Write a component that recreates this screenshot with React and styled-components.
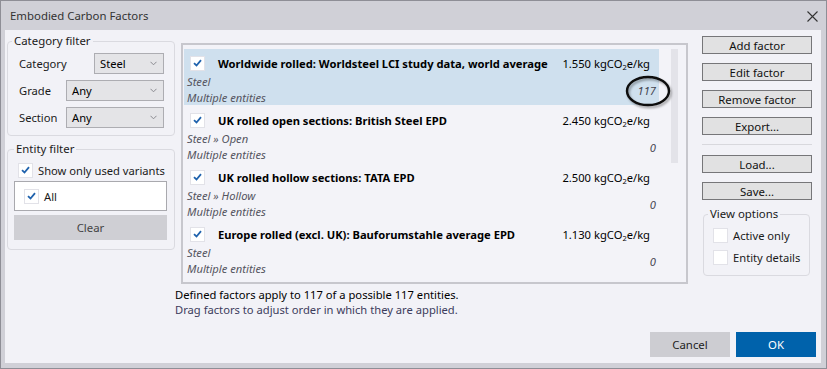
import React from "react";
import styled, { createGlobalStyle } from "styled-components";

const GlobalStyle = createGlobalStyle`
  html, body {
    margin: 0;
    padding: 0;
  }
  body {
    font-family: "Noto Sans", "Open Sans", sans-serif;
    font-size: 11.2px;
    color: #000;
    background: #f2f2f7;
  }
`;

const Window = styled.div`
  width: 827px;
  height: 369px;
  box-sizing: border-box;
  border: 1px solid #8e8e96;
  background: #d0d0d7;
  padding: 0 5px 5px 4px;
  display: flex;
  flex-direction: column;
`;

const TitleBar = styled.div`
  height: 29px;
  display: flex;
  align-items: center;
  justify-content: space-between;
  padding: 0 3px 0 5px;
  color: #333;
  font-size: 11.4px;
`;

const CloseButton = styled.svg`
  width: 11px;
  height: 11px;
  margin-top: 2px;
`;

const Content = styled.div`
  flex: 1;
  background: #f2f2f7;
  display: flex;
  flex-direction: column;
`;

const Main = styled.div`
  display: grid;
  grid-template-columns: 168px 513px 124px;
  padding-left: 2px;
  align-items: start;
`;

const LeftCol = styled.div`
  padding-top: 3px;
  display: flex;
  flex-direction: column;
  gap: 5px;
`;

const Group = styled.fieldset`
  margin: 0;
  border: 1px solid #dadae0;
  border-radius: 4px;
  padding: ${({ $pad }) => $pad || "4px 10px 7px 11px"};
  display: flex;
  flex-direction: column;
  gap: ${({ $gap }) => $gap || "6px"};
  min-width: 0;
`;

const Legend = styled.legend`
  padding: 0 2px;
  margin-left: ${({ $shift }) => $shift || "-7px"};
  line-height: 16px;
  font-size: 11.4px;
  color: #1a1a1a;
`;

const FieldRow = styled.div`
  display: flex;
  align-items: center;
  justify-content: space-between;
  height: 21px;
`;

const FieldLabel = styled.span`
  color: #1a1a1a;
  font-size: 11.2px;
`;

const Select = styled.div`
  box-sizing: border-box;
  width: ${({ $w }) => $w}px;
  height: 21px;
  border: 1px solid #adadb2;
  background: #e4e4e7;
  display: flex;
  align-items: center;
  justify-content: space-between;
  padding: 0 6px 0 5px;
  font-size: 11.2px;
`;

const Chevron = styled.svg`
  width: 7px;
  height: 5px;
`;

const CheckRow = styled.label`
  display: flex;
  align-items: center;
  gap: 5px;
  height: ${({ $h }) => $h || 18}px;
  margin-left: ${({ $indent }) => $indent || 0}px;
  font-size: 11.2px;
  color: #1a1a1a;
  white-space: nowrap;
`;

const Box = styled.span`
  box-sizing: border-box;
  width: 15px;
  height: 15px;
  background: #fff;
  border: 1px solid #e2e2e8;
  display: inline-flex;
  align-items: center;
  justify-content: center;
  flex: none;
`;

const EntityList = styled.div`
  box-sizing: border-box;
  height: 30px;
  margin-top: 2px;
  background: #fff;
  border: 1px solid #a9a9ae;
  display: flex;
  align-items: center;
  padding-left: 9px;
`;

const ClearButton = styled.div`
  height: 25px;
  margin-top: 4px;
  background: #cfcfd4;
  color: #444;
  display: flex;
  align-items: center;
  justify-content: center;
  font-size: 11.4px;
`;

const CenterCol = styled.div`
  padding-top: 13px;
`;

const ListBox = styled.div`
  margin-left: 6px;
  width: 507px;
  height: 241px;
  box-sizing: border-box;
  border: 2px solid #c7c7cd;
  background: #f3f3f8;
  padding: 4px 8px 0 1px;
  display: flex;
  gap: 12px;
  align-items: flex-start;
`;

const Items = styled.div`
  width: 475px;
  display: flex;
  flex-direction: column;
`;

const Item = styled.div`
  position: relative;
  height: 57px;
  background: ${({ $selected }) => ($selected ? "#cfe0ee" : "transparent")};
  ${({ $selected }) => $selected && "height: 56px; margin-bottom: 1px;"}
`;

const ItemHead = styled.div`
  height: 22px;
  padding-top: 3px;
  display: flex;
  align-items: center;
  padding-left: 6px;
  padding-right: 9px;
`;

const ItemTitle = styled.span`
  font-weight: 700;
  margin-left: 13px;
  flex: 1;
  white-space: nowrap;
`;

const ItemValue = styled.span`
  white-space: nowrap;
`;

const Sub = styled.sub`
  font-size: 7.5px;
  vertical-align: -2px;
  line-height: 0;
`;

const ItemBody = styled.div`
  display: flex;
  align-items: center;
  justify-content: space-between;
  padding: 0 3px;
`;

const Meta = styled.div`
  display: flex;
  flex-direction: column;
  line-height: 16px;
  font-style: italic;
  color: #555560;
`;

const Count = styled.span`
  font-style: italic;
  color: #444450;
`;

const Annotation = styled.svg`
  position: absolute;
  left: 442px;
  top: 27px;
  width: 48px;
  height: 35px;
  overflow: visible;
`;

const Scrollbar = styled.div`
  width: 7px;
  height: 114px;
  background: #e3e3e9;
  flex: none;
`;

const Notes = styled.div`
  margin-top: 3px;
  line-height: 15px;
`;

const Note = styled.div`
  color: ${({ $muted }) => ($muted ? "#3c3c5c" : "#000")};
`;

const RightCol = styled.div`
  padding: 6px 0 0 14px;
  display: flex;
  flex-direction: column;
  gap: 9px;
`;

const SideButton = styled.div`
  box-sizing: border-box;
  height: 18px;
  border: 1px solid #767679;
  background: #e1e1e2;
  display: flex;
  align-items: center;
  justify-content: center;
  font-size: 11.4px;
  color: #111;
`;

const Separator = styled.div`
  height: 1px;
  background: #d8d8dd;
  margin: 0 0 1px;
`;

const ViewGroup = styled(Group)`
  margin: -3px 2px 0 1px;
`;

const Footer = styled.div`
  margin-top: auto;
  display: flex;
  justify-content: flex-end;
  gap: 6px;
  padding: 0 5px 6px 0;
`;

const DialogButton = styled.div`
  width: 80px;
  height: 25px;
  display: flex;
  align-items: center;
  justify-content: center;
  font-size: 11.4px;
  background: ${({ $primary }) => ($primary ? "#0062ab" : "#cdcdd2")};
  color: ${({ $primary }) => ($primary ? "#fff" : "#222")};
`;

const Check = () => (
  <svg width="9" height="8" viewBox="0 0 9 8">
    <path d="M1 4.2 L3.5 6.5 L8 1.2" fill="none" stroke="#1f62ad" strokeWidth="1.8" />
  </svg>
);

const Checkbox = ({ checked }) => <Box>{checked && <Check />}</Box>;

const SelectBox = ({ width, value }) => (
  <Select $w={width}>
    <span>{value}</span>
    <Chevron viewBox="0 0 7 5">
      <path d="M0.5 0.8 L3.5 3.8 L6.5 0.8" fill="none" stroke="#8a8a90" strokeWidth="1" />
    </Chevron>
  </Select>
);

const factors = [
  {
    title: "Worldwide rolled: Worldsteel LCI study data, world average",
    value: "1.550",
    path: "Steel",
    count: 117,
    selected: true,
  },
  { title: "UK rolled open sections: British Steel EPD", value: "2.450", path: "Steel » Open", count: 0 },
  { title: "UK rolled hollow sections: TATA EPD", value: "2.500", path: "Steel » Hollow", count: 0 },
  { title: "Europe rolled (excl. UK): Bauforumstahle average EPD", value: "1.130", path: "Steel", count: 0 },
];

export default function App() {
  return (
    <>
      <GlobalStyle />
      <Window>
        <TitleBar>
          <span>Embodied Carbon Factors</span>
          <CloseButton viewBox="0 0 11 11">
            <path d="M0.5 0.5 L10.5 10.5 M10.5 0.5 L0.5 10.5" stroke="#333" strokeWidth="1.1" />
          </CloseButton>
        </TitleBar>
        <Content>
          <Main>
            <LeftCol>
              <Group>
                <Legend>Category filter</Legend>
                <FieldRow>
                  <FieldLabel>Category</FieldLabel>
                  <SelectBox width={70} value="Steel" />
                </FieldRow>
                <FieldRow>
                  <FieldLabel>Grade</FieldLabel>
                  <SelectBox width={98} value="Any" />
                </FieldRow>
                <FieldRow>
                  <FieldLabel>Section</FieldLabel>
                  <SelectBox width={98} value="Any" />
                </FieldRow>
              </Group>
              <Group $pad="4px 7px 9px 6px" $gap="0px">
                <Legend $shift="0px">Entity filter</Legend>
                <CheckRow $indent={4}>
                  <Checkbox checked />
                  Show only used variants
                </CheckRow>
                <EntityList>
                  <CheckRow>
                    <Checkbox checked />
                    All
                  </CheckRow>
                </EntityList>
                <ClearButton>Clear</ClearButton>
              </Group>
            </LeftCol>

            <CenterCol>
              <ListBox>
                <Items>
                  {factors.map((f) => (
                    <Item key={f.title} $selected={f.selected}>
                      <ItemHead>
                        <Checkbox checked />
                        <ItemTitle>{f.title}</ItemTitle>
                        <ItemValue>
                          {f.value} kgCO<Sub>2</Sub>e/kg
                        </ItemValue>
                      </ItemHead>
                      <ItemBody>
                        <Meta>
                          <span>{f.path}</span>
                          <span>Multiple entities</span>
                        </Meta>
                        <Count>{f.count}</Count>
                      </ItemBody>
                      {f.selected && (
                        <Annotation viewBox="0 0 48 35">
                          <defs>
                            <filter id="shadow" x="-30%" y="-30%" width="160%" height="160%">
                              <feDropShadow dx="1.5" dy="2" stdDeviation="1.2" floodColor="#000" floodOpacity="0.35" />
                            </filter>
                          </defs>
                          <ellipse cx="22" cy="15" rx="21" ry="14" fill="none" stroke="#111" strokeWidth="2.4" filter="url(#shadow)" />
                        </Annotation>
                      )}
                    </Item>
                  ))}
                </Items>
                <Scrollbar />
              </ListBox>
              <Notes>
                <Note>Defined factors apply to 117 of a possible 117 entities.</Note>
                <Note $muted>Drag factors to adjust order in which they are applied.</Note>
              </Notes>
            </CenterCol>

            <RightCol>
              <SideButton>Add factor</SideButton>
              <SideButton>Edit factor</SideButton>
              <SideButton>Remove factor</SideButton>
              <SideButton>Export...</SideButton>
              <Separator />
              <SideButton>Load...</SideButton>
              <SideButton>Save...</SideButton>
              <ViewGroup $pad="6px 6px 10px 9px" $gap="7px">
                <Legend $shift="-5px">View options</Legend>
                <CheckRow $h={15}>
                  <Checkbox />
                  Active only
                </CheckRow>
                <CheckRow $h={15}>
                  <Checkbox />
                  Entity details
                </CheckRow>
              </ViewGroup>
            </RightCol>
          </Main>
          <Footer>
            <DialogButton>Cancel</DialogButton>
            <DialogButton $primary>OK</DialogButton>
          </Footer>
        </Content>
      </Window>
    </>
  );
}
